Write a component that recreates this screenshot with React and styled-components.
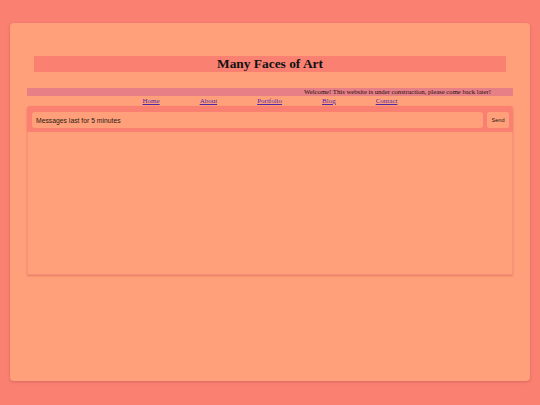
import styled, { createGlobalStyle } from "styled-components";

const GlobalStyle = createGlobalStyle`
  html, body {
    margin: 0;
    padding: 0;
    background: #fa8072;
    font-family: "Liberation Serif", "Times New Roman", serif;
  }
`;

const Page = styled.div`
  width: 540px;
  height: 405px;
  padding: 23px 10px 0;
  box-sizing: border-box;
`;

const Card = styled.main`
  height: 358px;
  background: #ffa07a;
  border-radius: 4px;
  box-shadow: 0 1px 3px rgba(150, 60, 50, 0.35);
  padding: 33px 17px 0;
  box-sizing: border-box;
  display: flex;
  flex-direction: column;
`;

const TitleBar = styled.header`
  margin: 0 7px;
  height: 16px;
  background: #fa8072;
  display: flex;
  align-items: center;
  justify-content: center;
`;

const Title = styled.h1`
  margin: 0;
  font-size: 13.4px;
  font-weight: 700;
  color: #111;
`;

const Marquee = styled.div`
  margin-top: 16px;
  height: 8px;
  background: #e77f86;
  overflow: hidden;
  white-space: nowrap;
  font-size: 6.7px;
  line-height: 8px;
  color: #1e1010;
  padding-left: 277px;
`;

const Nav = styled.nav`
  height: 10px;
  display: flex;
  justify-content: center;
  gap: 40px;
  font-size: 7px;
  line-height: 10px;
`;

const NavLink = styled.a`
  color: #5028a8;
  text-decoration: underline;
`;

const Chat = styled.section`
  height: 169px;
  display: flex;
  flex-direction: column;
  border-radius: 3px 3px 0 0;
  box-shadow: 0 1px 2px rgba(190, 80, 70, 0.45);
`;

const ChatBar = styled.div`
  height: 26px;
  background: #fa8072;
  border-radius: 3px 3px 0 0;
  padding: 6px 4px 4px 5px;
  box-sizing: border-box;
  display: flex;
  gap: 4px;
`;

const MessageInput = styled.div`
  flex: 1;
  background: #ffa07a;
  border-radius: 3px;
  font-family: "Liberation Sans", Arial, sans-serif;
  font-size: 6.8px;
  color: #2a1a14;
  display: flex;
  align-items: center;
  padding-left: 4px;
`;

const SendButton = styled.button`
  width: 22px;
  height: 16px;
  border: none;
  border-radius: 2px;
  background: #ffa07a;
  font-family: "Liberation Sans", Arial, sans-serif;
  font-size: 5.6px;
  color: #2a1a14;
  padding: 0;
`;

const Messages = styled.div`
  flex: 1;
  background: #ffa07a;
  border: 1px solid #fb9078;
  border-top: none;
`;

export default function App() {
  const links = ["Home", "About", "Portfolio", "Blog", "Contact"];
  return (
    <>
      <GlobalStyle />
      <Page>
        <Card>
          <TitleBar>
            <Title>Many Faces of Art</Title>
          </TitleBar>
          <Marquee>
            Welcome! This website is under construction, please come back later!
          </Marquee>
          <Nav>
            {links.map((l) => (
              <NavLink key={l} href="#">
                {l}
              </NavLink>
            ))}
          </Nav>
          <Chat>
            <ChatBar>
              <MessageInput>Messages last for 5 minutes</MessageInput>
              <SendButton>Send</SendButton>
            </ChatBar>
            <Messages />
          </Chat>
        </Card>
      </Page>
    </>
  );
}
